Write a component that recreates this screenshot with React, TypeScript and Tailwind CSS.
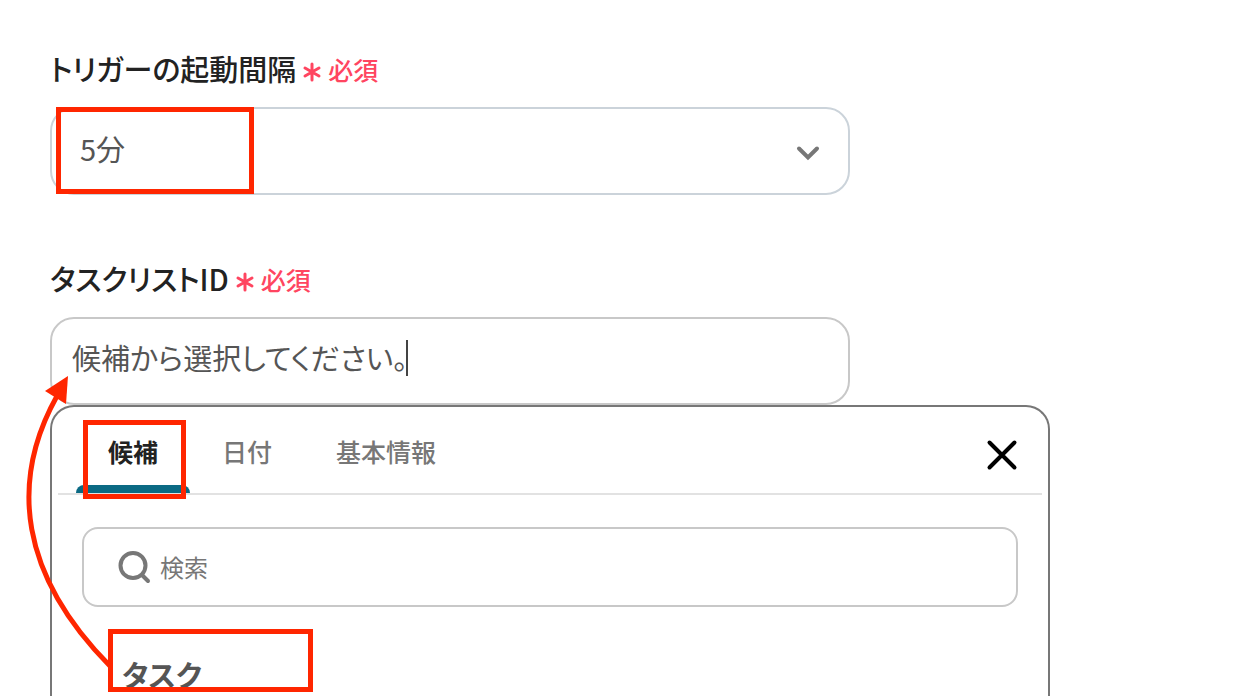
import { useState } from 'react'

const TABS = ['候補', '日付', '基本情報']

function RequiredMark() {
  return (
    <span className="flex items-center gap-1.5 pt-0.5 text-[25px] font-medium text-[#ff4560]">
      <svg viewBox="0 0 20 20" className="mt-1 size-5" fill="none" stroke="currentColor" strokeWidth="3" strokeLinecap="round" aria-hidden="true">
        <path d="M10 2v16M3 6l14 8M17 6L3 14" />
      </svg>
      必須
    </span>
  )
}

function Highlight({ className }: { className: string }) {
  return <span className={`pointer-events-none absolute border-5 border-[#ff2600] ${className}`} />
}

export default function App() {
  const [interval, setInterval] = useState('5')
  const [listId, setListId] = useState('候補から選択してください。')
  const [tab, setTab] = useState('候補')

  return (
    <div className="flex min-h-screen flex-col overflow-hidden bg-white pt-[47px] pl-[50px] font-['Noto_Sans_CJK_JP',sans-serif] text-[#222] [font-feature-settings:'palt']">
      <div className="mb-[62px] flex max-w-[800px] flex-col gap-4">
        <div className="flex h-11 items-center gap-1.5">
          <label htmlFor="interval" className="text-[29px] font-medium">トリガーの起動間隔</label>
          <RequiredMark />
        </div>
        <div className="relative flex">
          <select
            id="interval"
            value={interval}
            onChange={(e) => setInterval(e.target.value)}
            className="h-[88px] w-full appearance-none rounded-3xl border-2 border-[#cbd3da] bg-white px-7 pb-1 text-[29px] text-[#555]"
          >
            <option value="5">5分</option>
            <option value="10">10分</option>
            <option value="15">15分</option>
          </select>
          <svg viewBox="0 0 24 16" className="pointer-events-none absolute top-[38px] right-[30px] h-4 w-6" fill="none" stroke="#777" strokeWidth="4" strokeLinecap="round" aria-hidden="true">
            <path d="M3 3.5l9 9 9-9" />
          </svg>
          <Highlight className="top-0 bottom-px left-1.5 w-[198px]" />
        </div>
      </div>

      <div className="flex max-w-[800px] flex-col gap-4">
        <div className="flex h-11 items-center gap-1.5">
          <label htmlFor="list-id" className="text-[29px] font-medium">タスクリストID</label>
          <RequiredMark />
        </div>
        <div className="flex h-[88px] items-center rounded-3xl border-2 border-[#c8c8c8] px-5 pb-1.5">
          <input
            id="list-id"
            value={listId}
            onChange={(e) => setListId(e.target.value)}
            className="field-sizing-content max-w-full text-[29px] text-[#555] outline-none"
          />
          <span className="-ml-0.5 h-9 w-0.5 bg-[#444]" />
        </div>
      </div>

      <div className="relative mr-6 flex max-w-[1000px] grow flex-col rounded-t-3xl border-2 border-b-0 border-[#777] bg-white px-1.5">
        <div className="flex h-22 items-stretch justify-between border-b-2 border-[#e2e2e2] pr-6 pl-[18px]">
          <div role="tablist" className="flex">
            {TABS.map((name) => (
              <button
                key={name}
                role="tab"
                aria-selected={tab === name}
                onClick={() => setTab(name)}
                className={`relative px-8 pt-1 text-[25px] ${tab === name ? 'font-bold text-[#222]' : 'font-medium text-[#777]'}`}
              >
                {name}
                {tab === name && <span className="absolute inset-x-0 bottom-0 h-2 rounded-t-lg bg-[#0b6a84]" />}
                {name === TABS[0] && <Highlight className="top-[13px] right-1 -bottom-1.5 left-[7px]" />}
              </button>
            ))}
          </div>
          <button aria-label="閉じる" className="mt-2.5">
            <svg viewBox="0 0 32 32" className="size-8" fill="none" stroke="#000" strokeWidth="4" strokeLinecap="round">
              <path d="M3.5 3.5l25 25M28.5 3.5l-25 25" />
            </svg>
          </button>
        </div>

        <div className="flex flex-col gap-[22px] px-6 pt-8">
          <div className="flex h-20 items-center gap-2 rounded-2xl border-2 border-[#c8c8c8] px-[34px]">
            <svg viewBox="0 0 34 34" className="size-[34px] shrink-0" fill="none" stroke="#777" strokeWidth="4" strokeLinecap="round" aria-hidden="true">
              <circle cx="15" cy="15.5" r="12.5" />
              <path d="M24 25l6 6" />
            </svg>
            <input aria-label="検索" placeholder="検索" className="w-full text-2xl outline-none placeholder:text-[#777]" />
          </div>
          <button className="relative ml-[26px] h-[63px] w-[205px] px-3.5 pt-6 text-left text-[29px] font-bold text-[#555]">
            タスク
            <Highlight className="inset-0" />
          </button>
        </div>

        {/* arrow from the option up to the input */}
        <svg viewBox="0 0 100 300" className="pointer-events-none absolute -top-9 -left-8 h-[300px] w-[100px]" aria-hidden="true">
          <path d="M37 25C-11 111 0 204 90 295" fill="none" stroke="#ff2600" strokeWidth="5" />
          <path d="M48 5L25 20L46 33Z" fill="#ff2600" />
        </svg>
      </div>
    </div>
  )
}
